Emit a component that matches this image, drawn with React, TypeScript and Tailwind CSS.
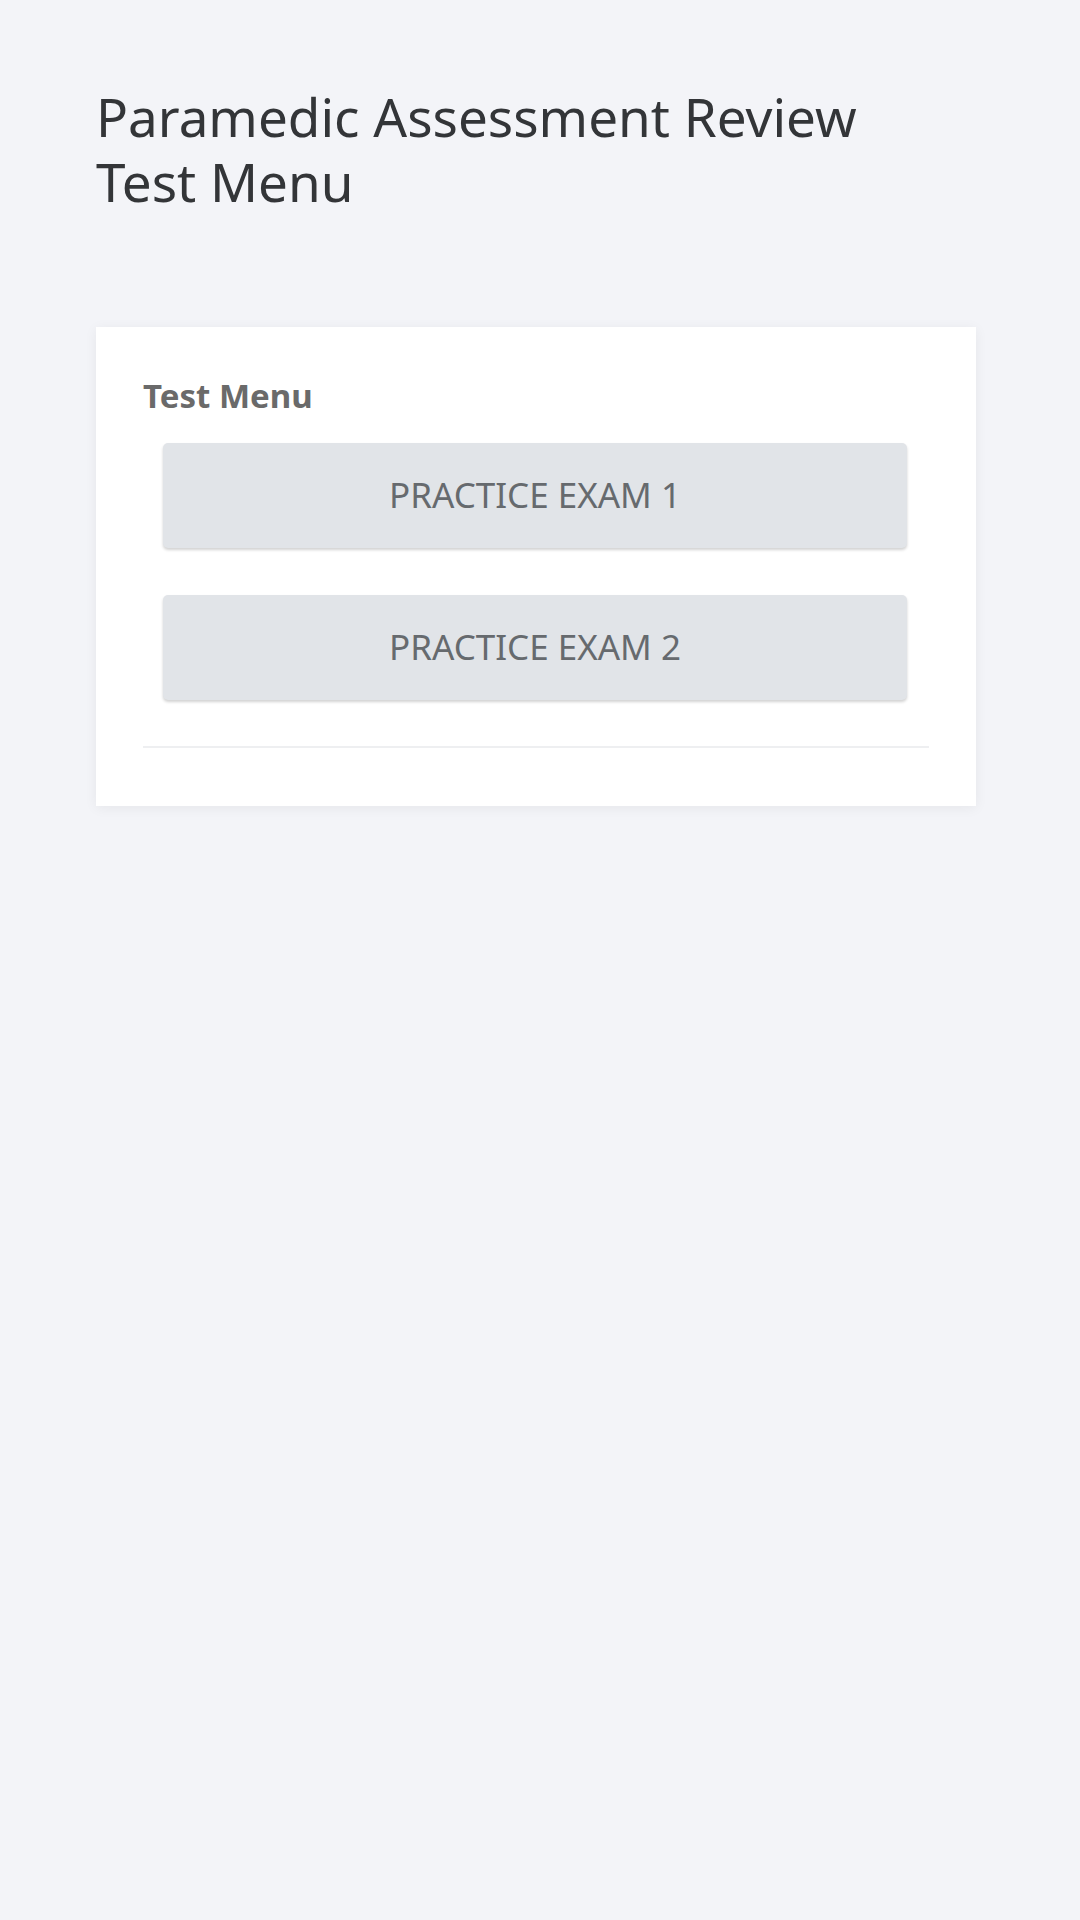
const exams = ['PRACTICE EXAM 1', 'PRACTICE EXAM 2'];

function ExamButton({ label }: { label: string }) {
  return (
    <button
      type="button"
      className="flex h-[105px] w-full items-center justify-center rounded-[5px] bg-[#e1e4e8] text-[35px] text-[#666a6e] shadow-[0_2px_3px_rgba(0,0,0,0.18)]"
    >
      {label}
    </button>
  );
}

export default function App() {
  return (
    <div
      className="min-h-[1920px] w-full bg-[#f3f4f8] px-[96px] pt-[84px]"
      style={{ fontFamily: '"Noto Sans", "Open Sans", sans-serif' }}
    >
      {/* Page title */}
      <h1 className="text-[53px] leading-[65px] text-[#333538]">
        <span className="block">Paramedic Assessment Review</span>
        <span className="block">Test Menu</span>
      </h1>

      {/* Menu card */}
      <section className="mt-[113px] w-[880px] bg-white px-[47px] pb-[58px] pt-[52px] shadow-[0_2px_12px_rgba(0,0,0,0.06)]">
        <h2 className="text-[33px] font-bold leading-[33px] text-[#6a6a6a]">
          Test Menu
        </h2>
        <div className="mt-[31px] flex flex-col gap-[47px] pl-[20px] pr-[22px]">
          {exams.map((label) => (
            <ExamButton key={label} label={label} />
          ))}
        </div>
        <div className="mt-[46px] h-[2px] bg-[#eeeff1]" />
      </section>
    </div>
  );
}
